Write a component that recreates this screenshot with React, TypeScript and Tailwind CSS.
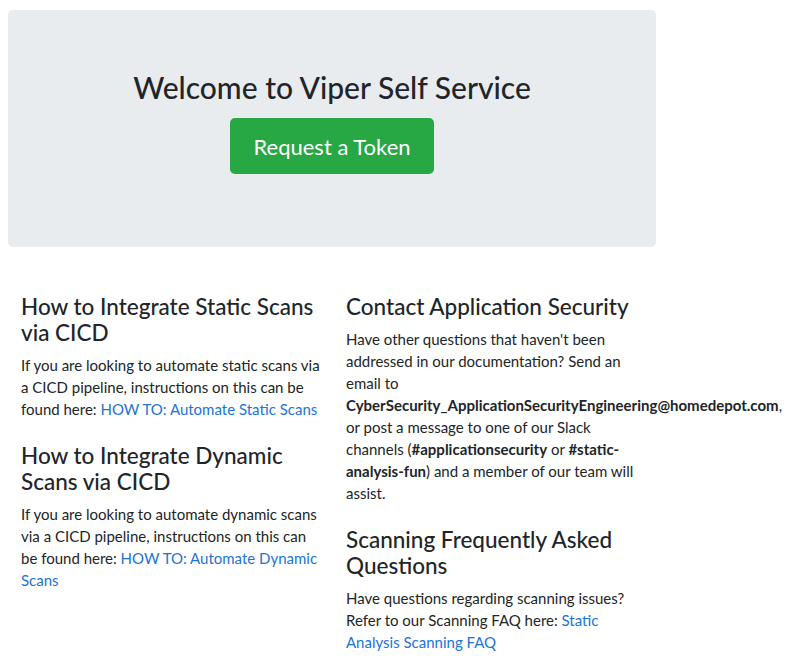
const FONT = "font-['Lato','Segoe_UI',sans-serif]";

const Link = ({ children }: { children: React.ReactNode }) => (
  <a href="#" className="text-[#1b74d6] hover:underline">
    {children}
  </a>
);

const Section = ({
  title,
  children,
  className = "",
}: {
  title: string;
  children: React.ReactNode;
  className?: string;
}) => (
  <div className={className}>
    <h3 className="text-[22.5px] leading-[26px] font-medium text-[#212529] mb-[8px]">{title}</h3>
    <p className="text-[15px] leading-[22px] text-[#212529]">{children}</p>
  </div>
);

export default function App() {
  return (
    <div className={`${FONT} bg-white min-h-screen pt-[10px] text-[#212529]`}>
      <div className="w-[648px] ml-[8px]">
        <div className="bg-[#e9ecef] rounded-[5px] h-[237px] flex flex-col items-center pt-[57px]">
          <h1 className="text-[30px] leading-[40px] font-medium text-[#212529]">
            Welcome to Viper Self Service
          </h1>
          <button
            type="button"
            className="mt-[11px] w-[204px] h-[56px] rounded-[5px] bg-[#28a745] text-white text-[22px]"
          >
            Request a Token
          </button>
        </div>

        <div className="grid grid-cols-[324px_324px] mt-[47px]">
          <div className="pl-[13px] pr-[8px]">
            <Section title="How to Integrate Static Scans via CICD">
              If you are looking to automate static scans via a CICD pipeline, instructions on this can
              be found here: <Link>HOW TO: Automate Static Scans</Link>
            </Section>
            <Section title="How to Integrate Dynamic Scans via CICD" className="mt-[23px]">
              If you are looking to automate dynamic scans via a CICD pipeline, instructions on this
              can be found here: <Link>HOW TO: Automate Dynamic Scans</Link>
            </Section>
          </div>
          <div className="px-[14px]">
            <Section title="Contact Application Security">
              Have other questions that haven't been addressed in our documentation? Send an email to{" "}
              <b>CyberSecurity_ApplicationSecurityEngineering@homedepot.com</b>, or post a message to
              one of our Slack channels (<b>#applicationsecurity</b> or <b>#static-analysis-fun</b>)
              and a member of our team will assist.
            </Section>
            <Section title="Scanning Frequently Asked Questions" className="mt-[23px]">
              Have questions regarding scanning issues? Refer to our Scanning FAQ here:{" "}
              <Link>Static Analysis Scanning FAQ</Link>
            </Section>
          </div>
        </div>
      </div>
    </div>
  );
}
